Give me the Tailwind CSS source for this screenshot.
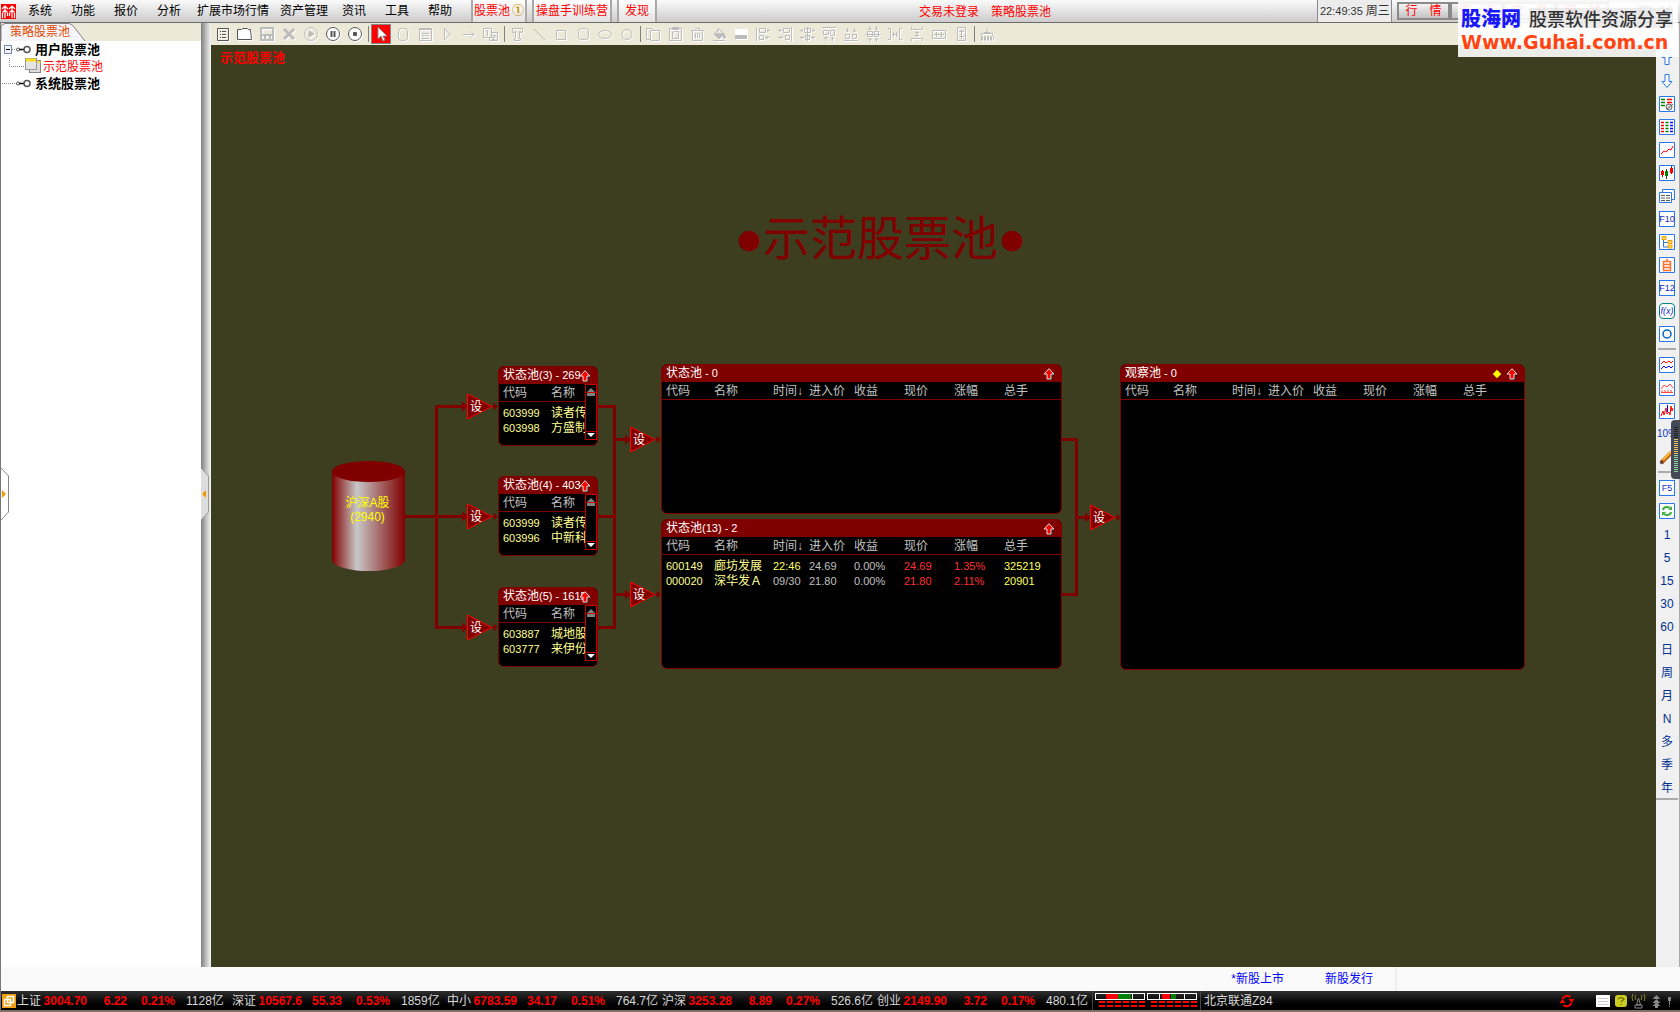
<!DOCTYPE html>
<html lang="zh-CN">
<head>
<meta charset="utf-8">
<title>策略股票池</title>
<script src="https://cdn.jsdelivr.net/npm/@tailwindcss/browser@4"></script>
</head>
<body class="flex h-screen flex-col overflow-hidden bg-[#7d7264] font-['Liberation_Sans','Noto_Sans_CJK_SC',sans-serif] text-xs leading-4 text-black">

<header class="relative flex h-[23px] shrink-0 items-center border-b border-[#6c6c6c] bg-linear-to-b from-[#fafafa] to-[#cccccc] pl-px whitespace-nowrap">
  <svg class="mr-3 size-[15px] shrink-0" viewBox="0 0 15 15"><rect width="15" height="15" fill="#f00"/><path d="M1 5l3-3 3 3M8 5l3-3 3 3M1.500 8.500L4 6l2.500 2.500M8.500 8.500L11 6l2.500 2.500M4 3v11M11 3v11M1.500 9v5M6.500 9v3M8.500 9v3M13.500 9v5" fill="none" stroke="#fff" stroke-width="1.200"/></svg>
  <nav class="flex h-full shrink-0 items-stretch">
    <button class="w-[43px] text-left">系统</button>
    <button class="w-[43px] text-left">功能</button>
    <button class="w-[43px] text-left">报价</button>
    <button class="w-[40px] text-left">分析</button>
    <button class="w-[83px] text-left">扩展市场行情</button>
    <button class="w-[62px] text-left">资产管理</button>
    <button class="w-[43px] text-left">资讯</button>
    <button class="w-[43px] text-left">工具</button>
    <button class="w-[43px] text-left">帮助</button>
    <button class="mr-[5px] flex w-[56px] items-center justify-center gap-0.5 border-x-2 border-[#a8a8a8] bg-linear-to-b from-white to-[#e2e2e2] text-[#f00]">股票池<span class="font-bold text-[#d09000]">①</span></button>
    <button class="mr-[5px] w-[80px] border-x-2 border-[#a8a8a8] bg-linear-to-b from-white to-[#e2e2e2] text-[#f00]">操盘手训练营</button>
    <button class="w-[40px] border-x-2 border-[#a8a8a8] bg-linear-to-b from-white to-[#e2e2e2] text-[#f00]">发现</button>
  </nav>
  <div class="flex flex-1 justify-center gap-3 pt-px pr-1 text-[#f00]"><span>交易未登录</span><span>策略股票池</span></div>
  <time class="flex h-full w-[75px] shrink-0 items-center border-x border-[#8a8a8a] bg-[#ececec] pl-0.5 text-[#333]"><span class="mr-[3px] text-[11px]">22:49:35</span>周三</time>
  <div class="flex w-[288px] shrink-0 items-center pl-[5px] text-[#f00]">
    <button class="h-[18px] w-[53px] border-2 border-[#8a8a8a] bg-linear-to-b from-[#f4f4f4] to-[#c2c2c2] leading-[14px]">行　情</button>
    <button class="h-[18px] w-[53px] border-2 border-[#8a8a8a] bg-linear-to-b from-[#f4f4f4] to-[#c2c2c2] leading-[14px]">资　讯</button>
    <button class="h-[18px] w-[53px] border-2 border-[#8a8a8a] bg-linear-to-b from-[#f4f4f4] to-[#c2c2c2] leading-[14px]">交　易</button>
    <button class="h-[18px] w-[53px] border-2 border-[#8a8a8a] bg-linear-to-b from-[#f4f4f4] to-[#c2c2c2] leading-[14px]">网　站</button>
    <svg class="ml-2 h-4 w-[60px]" viewBox="0 0 60 16" fill="none" stroke="#666" stroke-width="2"><path d="M4 12h9M23 4h10v8H23zM44 3l10 10M54 3L44 13"/></svg>
  </div>
</header>

<div class="flex min-h-0 flex-1 border-l border-[#777]">
  <aside class="relative flex w-[200px] shrink-0 flex-col bg-white">
    <div class="flex h-[18px] shrink-0 bg-[#ece9d8]">
      <svg class="absolute top-0 left-0 h-[18px] w-[90px]" viewBox="0 0 90 18"><path d="M0 18V4Q1 1 4 .5H68Q71 1 73 4L84 18" fill="#f6f6fa" stroke="#808080"/></svg>
      <button class="relative ml-[9px] text-[#e04a00]">策略股票池</button>
    </div>
    <ul class="text-[13px]">
      <li class="flex h-[17px] items-center font-bold"><svg class="mr-1 h-[17px] w-[30px]" viewBox="0 0 30 17" fill="none"><rect x="3.500" y="4.500" width="7" height="8" stroke="#7788bb" fill="#f5f5fa"/><path d="M5 8.500h4" stroke="#000"/><path d="M11 8.500h5" stroke="#888" stroke-dasharray="1 1"/><circle cx="17" cy="8.500" r="1.500" stroke="#555"/><path d="M18 8.500h5" stroke="#000" stroke-width="1.500"/><circle cx="26" cy="8.500" r="3" stroke="#555" stroke-width="1.500"/></svg>用户股票池</li>
      <li class="flex h-[17px] items-center text-xs text-[#f00]"><svg class="mr-0.5 h-[17px] w-[40px]" viewBox="0 0 40 17" fill="none"><path d="M8.500 0v8.500H24M37 8.500h3" stroke="#888" stroke-dasharray="1 1"/><rect x="28.500" y="2.500" width="11" height="12" fill="#ddd" stroke="#888"/><rect x="24.500" y=".500" width="11" height="11" fill="#e4e4e4" stroke="#999"/><path d="M25 2h10" stroke="#f8e020" stroke-width="3"/><path d="M36.500 4h3" stroke="#f8e020" stroke-width="2"/></svg>示范股票池</li>
      <li class="flex h-[17px] items-center font-bold"><svg class="mr-1 h-[17px] w-[30px]" viewBox="0 0 30 17" fill="none"><path d="M1 8.500h15" stroke="#888" stroke-dasharray="1 1"/><circle cx="17" cy="8.500" r="1.500" stroke="#555"/><path d="M18 8.500h5" stroke="#000" stroke-width="1.500"/><circle cx="26" cy="8.500" r="3" stroke="#555" stroke-width="1.500"/></svg>系统股票池</li>
    </ul>
    <svg class="absolute top-[444px] left-0 h-[54px] w-[9px]" viewBox="0 0 9 54"><path d="M0 1l7.500 8v36L0 53" fill="#fff" stroke="#888"/><path d="M1 23l4 4-4 4z" fill="#f09800"/></svg>
  </aside>
  <div class="relative w-[10px] shrink-0 bg-linear-to-r from-[#808080] via-[#bdbdbd] to-[#f6f6f6]">
    <svg class="absolute top-[444px] left-0 h-[54px] w-[9px]" viewBox="0 0 9 54"><path d="M0 1l7.500 8v36L0 53" fill="#ddd" stroke="#999"/><path d="M5 23l-4 4 4 4z" fill="#f09800"/></svg>
  </div>

  <main class="flex min-w-0 flex-1 flex-col">
    <div id="tools" class="flex h-[22px] shrink-0 items-center bg-[#ece9d8] pl-px"></div>
    <div class="relative flex-1 overflow-hidden bg-[#3d3d20]">
      <p class="pt-[5px] pl-[9px] text-[13px] font-bold text-[#f00]">示范股票池</p>
      <h1 class="absolute top-[170px] left-[524px] flex items-center text-[47px] leading-[48px] font-normal whitespace-nowrap text-[#800000]"><span class="flex w-[28px] justify-center font-['DejaVu_Sans'] text-[27px]">●</span>示范股票池<span class="flex w-[28px] justify-center font-['DejaVu_Sans'] text-[27px]">●</span></h1>
      <svg class="absolute top-0 left-0 h-[922px] w-[1445px]" viewBox="211 45 1445 922" fill="none">
        <defs>
          <linearGradient id="cyl"><stop offset="0" stop-color="#800000"/><stop offset=".34" stop-color="#c8c8c8"/><stop offset="1" stop-color="#800000"/></linearGradient>
          <g id="gate"><path d="M-5-5l6 5-6 5z" fill="#800000"/><path d="M.500-12.500L25 0 .500 12.500z" fill="#800000" stroke="#f00"/><path d="M25 0h3M27-3l3 3-3 3z" fill="#800000" stroke="#800000"/></g>
        </defs>
        <g stroke="#800000" stroke-width="3" stroke-linejoin="round">
          <path d="M405 516.500h60M465 406.500h-28.500v221H465M598 406.500h16.500v221H598M598 516.500h16M614 439.500h14M614 594.500h14M1062 439.500h14.500v155H1062M1076 517.500h12"/>
        </g>
        <use href="#gate" x="467" y="406.500"/><use href="#gate" x="467" y="516.500"/><use href="#gate" x="467" y="627.500"/>
        <use href="#gate" x="630" y="439.500"/><use href="#gate" x="630" y="594.500"/><use href="#gate" x="1090" y="517.500"/>
        <path d="M332 471v89a36.500 11 0 0 0 73 0v-89z" fill="url(#cyl)"/>
        <ellipse cx="368.500" cy="471.500" rx="36.500" ry="10.500" fill="#800000"/>
      </svg>
      <div id="nodes"></div>
    </div>
  </main>

  <aside id="side" class="flex w-6 shrink-0 flex-col border-r border-[#aaa] bg-[#f0f0f0] pt-[23px] pr-px"></aside>
</div>

<div class="flex h-6 shrink-0 items-stretch border-l border-[#777] bg-[#fafafa]">
  <div class="flex flex-1 items-center justify-end gap-[41px] border-r-2 border-[#eee] pr-[22px] text-[#00f]"><a href="#">*新股上市</a><a href="#">新股发行</a></div>
  <div class="w-[283px]"></div>
</div>

<footer class="mb-0.5 flex h-[19px] shrink-0 items-center border-l border-[#777] bg-linear-to-b from-[#303030] to-black pl-px whitespace-nowrap text-[#d8d8d8]">
  <svg class="mr-px size-[14px] shrink-0" viewBox="0 0 14 14"><rect width="14" height="14" fill="#f0a010"/><path d="M5.500 2.500h6v6h-6zM2.500 5.500h6v6h-6z" fill="none" stroke="#fff" stroke-width="1.500"/></svg>
  <div id="quotes" class="flex shrink-0"></div>
  <svg class="h-[19px] w-[109px] shrink-0" viewBox="1092 0 109 19" shape-rendering="crispEdges"><path d="M1092.500 0v19M1200 0v19" stroke="#444"/><path d="M1106 3h12v5h-12zM1162 3h8v5h-8z" fill="#f00"/><path d="M1118 3h13v5h-13zM1171 3h5v5h-5z" fill="#008000"/><path d="M1095.500 2.500h49v6h-49zM1147.500 2.500h49v6h-49zM1132.500 3v5M1159.500 3v5M1184.500 3v5" stroke="#fff" fill="none"/><path d="M1099 11h46M1099 15h46M1151 11h46M1151 15h46" stroke="#f00" stroke-width="2" stroke-dasharray="6 2"/></svg>
  <span class="ml-[3px] flex-1">北京联通Z84</span>
  <svg class="h-4 w-[122px] shrink-0" viewBox="1558 0 122 16" fill="none"><path d="M1562.500 6a5 5 0 0 1 8-2M1571.500 10a5 5 0 0 1-8 2" stroke="#f00" stroke-width="2"/><path d="M1568.500 6h6l-3 4zM1559.500 10h6l-3-4z" fill="#f00"/><rect x="1596" y="2" width="14" height="12" fill="#fff"/><path d="M1598 5.500h10M1598 8.500h10M1598 11.500h10" stroke="#ccc"/><rect x="1615" y="2" width="12" height="12" rx="3" fill="#cccc20"/><path d="M1618 6q3-3 6 0l-3 3M1621 11v1" stroke="#777700" stroke-width="1.500"/><path d="M1638.500 5l-2 7h4zM1635 12h7v3h-7z" stroke="#888"/><path d="M1636 2q-2 2 0 5M1633 1q-2 3 0 7M1641 2q2 2 0 5M1644 1q2 3 0 7" stroke="#888820"/><path d="M1656.500 2l4 4h-8zM1656.500 6l4 4h-8zM1656.500 9l4 4h-8zM1655 12h3v3h-3z" fill="#888"/><path d="M1668 4h3v4h-3zM1669 8h1v4h-1zM1669 13h1v1h-1z" fill="#888"/></svg>
</footer>

<div class="absolute top-0.5 right-0.5 flex h-[55px] w-[220px] flex-col bg-white/90 pt-1 pl-[3px] whitespace-nowrap">
  <div class="flex h-6 items-center gap-2"><b class="font-['Noto_Sans_CJK_SC'] text-xl leading-6 font-black text-[#1818f8]">股海网</b><span class="bg-[#bbb]/25 font-['Noto_Sans_CJK_SC'] text-lg leading-5 font-medium text-[#333]">股票软件资源分享</span></div>
  <a href="#" class="font-['DejaVu_Sans'] text-[19px] leading-6 font-bold text-[#ff4412]">Www.Guhai.com.cn</a>
</div>

<svg class="absolute top-[420px] right-0 h-[59px] w-[9px]" viewBox="0 0 9 59"><path d="M9 0H4Q0 0 0 4v51q0 4 4 4h5z" fill="#444a55"/><path d="M5 7v13" stroke="#222" stroke-width="4" stroke-dasharray="1 1"/><path d="M5 19v16" stroke="#e8c060" stroke-width="4" stroke-dasharray="1 1"/><path d="M5 35v18" stroke="#90d0a0" stroke-width="4" stroke-dasharray="1 1"/></svg>

<script>
const el = id => document.getElementById(id);

/* Toolbar: [label, svg body, state]; null is a separator */
const tools = [
 ['新建','<path d="M2.500 2.500h11v12h-11zM5 5.500h1M7 5.500h4M5 8.500h1M7 8.500h4M5 11.500h1M7 11.500h4"/>',1],
 ['打开','<path d="M.500 3.500h4l1-1h5l1 1h2l1 10h-14z" fill="#fff"/>',1],
 ['保存','<path d="M2 2h12v12H2z" stroke-width="2"/><path d="M2 8h12v2H2zM5 10h2v4H5zM10 10h2v4h-2z" fill="currentColor" stroke="none"/>'],
 ['删除','<path d="M3 3l10 10M13 3L3 13" stroke-width="3"/>'],
 ['运行','<circle cx="8" cy="8" r="6.500"/><path d="M6 5l5 3-5 3z" fill="currentColor"/>'],
 ['暂停','<circle cx="8" cy="8" r="6.500" fill="#fff"/><path d="M6.500 5v6M9.500 5v6" stroke-width="2"/>',1],
 ['停止','<circle cx="8" cy="8" r="6.500" fill="#fff"/><path d="M6.500 6.500h3v3h-3z" fill="currentColor"/>',1],
 null,
 ['选择','<path d="M5 1v12l3-3 2 5 2-1-2-4h4z" fill="#fff" stroke="#888"/>',2],
 ['股票池','<rect x="3.500" y="2.500" width="9" height="12" rx="3"/>'],
 ['状态池','<path d="M2.500 2.500h12v12h-12zM3 3.500h11M5 7.500h7M5 9.500h7M5 12.500h7"/>'],
 ['条件','<path d="M5.500 2.500l6 5.500-6 6z"/>'],
 ['连接','<path d="M2 8.500h11M10 5.500l3 3-3 3"/>'],
 ['顺序','<path d="M.500 2.500h8v9h-8zM9 6.500h5.500v8h-8v-3M3 4.500h1.500v5M9 9.500h3v2H9.500v2H12"/>'],
 null,
 ['文字','<path d="M3.500 2.500h10v4h-2v-1h-1v7h1v2h-6v-2h1v-7h-1v1h-2z"/>'],
 ['直线','<path d="M3 3l11 11"/>'],
 ['矩形','<path d="M3.500 4.500h9v9h-9z"/>'],
 ['圆角矩形','<rect x="3.500" y="2.500" width="10" height="11" rx="3"/>'],
 ['椭圆','<ellipse cx="8" cy="8.500" rx="6.500" ry="4"/>'],
 ['圆形','<circle cx="8" cy="8.500" r="5"/>'],
 null,
 ['复制','<path d="M1.500 2.500h5l2 2M1.500 2.500v11h4M5.500 4.500h9v10h-9z"/>'],
 ['粘贴','<path d="M2.500 2.500h12v12h-12zM5.500 1.500h6v2h-6zM5.500 6.500l2-1h4v7h-6z"/>'],
 ['清除','<path d="M2.500 4.500h12M6.500 2.500h4v2M3.500 4.500v10h10v-10M6.500 7v5M8.500 7v5M10.500 7v5"/>'],
 ['填充','<path d="M3 8l5-5 5 5-5 5zM5 8h7M7 2v5M2 14.500h12" /><path d="M4 8h8l-4 4zM13 8l2 4h-3z" fill="currentColor"/>'],
 ['颜色','<path d="M2 3h12v6H2z" fill="#fff" stroke="none"/><path d="M2 9h12v4H2z" fill="currentColor" stroke="none"/>'],
 ['左对齐','<path d="M1.500 1v14M4.500 2.500h6v4h-6zM4.500 9.500h4v4h-4zM12 4.500h3M10 11.500h5M13 3v3M12 10v3"/>'],
 ['右对齐','<path d="M14.500 1v14M6.500 2.500h6v4h-6zM8.500 9.500h4v4h-4zM1 4.500h4M1 11.500h5M3 3v3M4 10v3"/>'],
 ['水平居中','<path d="M8.500 1v14M5.500 2.500h6v4h-6zM6.500 9.500h4v4h-4zM1 4.500h3M13 4.500h3M1 11.500h4M12 11.500h4M3 3v3M14 3v3M3 10v3M14 10v3"/>'],
 ['顶端对齐','<path d="M1 1.500h14M2.500 4.500h5v4h-5zM9.500 4.500h4v5h-4zM5 10v5M11.500 11v4M3 12h4M10 12h3"/>'],
 ['底端对齐','<path d="M1 14.500h14M2.500 8.500h4v4h-4zM9.500 8.500h4v4h-4zM4.500 2v4M11.500 2v4M3 5h3M10 5h3"/>'],
 ['垂直居中','<path d="M0 8.500h16M2.500 5.500h5v5h-5zM9.500 5.500h4v5h-4zM5 0v4M11.500 0v4M5 12v4M11.500 12v4M3 3h4M10 3h3M3 13h4M10 13h3"/>'],
 ['横向等距','<path d="M1 2.500h2.500v11H1M15 2.500h-2.500v11H15M5 8.500h6M6.500 6v5M9.500 6v5"/>'],
 ['纵向等距','<path d="M2.500 1v2.500h11V1M2.500 15v-2.500h11V15M8 5v6M6 6.500h4M6 9.500h4"/>'],
 ['等宽','<path d="M1.500 4.500h13v8h-13zM3 8.500h10M5.500 6v5M10.500 6v5"/>'],
 ['等高','<path d="M4.500 1.500h8v13h-8zM8.500 3v10M6 5.500h5M6 10.500h5"/>'],
 null,
 ['清空','<path d="M8 2v5M2.500 10V7.500h11V10M5 6.500h6"/><path d="M2 12.500h13" stroke-width="4" stroke-dasharray="2 1"/>']
];
const toolCls = ['text-[#bcbcbc] drop-shadow-[1px_1px_0_#fff]','text-[#555] drop-shadow-[1px_1px_0_#fff]','text-white'];
el('tools').innerHTML = tools.map(t => !t
 ? '<span class="flex w-1 justify-center"><i class="h-4 w-px bg-[#808080]"></i></span>'
 : `<button aria-label="${t[0]}" class="flex h-5 w-[22px] items-center justify-center"><span class="flex h-5 w-5 items-center justify-center ${t[2]===2?'border border-[#888] bg-[#f00]':''}"><svg class="size-4 shrink-0 ${toolCls[t[2]||0]}" viewBox="0 0 16 16" fill="none" stroke="currentColor">${t[1]}</svg></span></button>`).join('');

/* Pool panels of the flow chart */
const up = '<svg class="size-3" viewBox="0 0 12 12"><path d="M7 2l5 5H9.500v5h-4V7z" fill="#222"/><path d="M6 .700L11 6H8v5H4V6H1z" fill="#f00" stroke="#ddd"/></svg>';
const big = ['代码','名称','时间↓','进入价','收益','现价','涨幅','总手'];
const cls = ['text-[#ffff90]','text-xs text-[#ffff90]','','text-[#c0c0c0]','text-[#c0c0c0]','text-[#ff3030]','text-[#ff3030]','text-[#ffff60]'];
function panel(place, name, count, cols, rows, small, mark) {
  const widths = small ? ['w-[52px]',''] : ['w-[52px]','w-[59px]','w-[36px]','w-[45px]','w-[50px]','w-[50px]','w-[50px]',''];
  return `<section class="absolute overflow-hidden rounded-md border border-[#800000] bg-black ${place}">
  <h2 class="flex h-[17px] items-center bg-[#800000] pl-1 leading-[15px] whitespace-nowrap text-white"><span class="${small?'w-[76px]':'flex-1'}">${name}<span class="text-[11px]">${count}</span></span>${mark?'<i class="mr-1.5 size-1.5 rotate-45 bg-[#ff0]"></i>':''}<span class="${small?'relative':'pr-[6px]'}">${up}</span></h2>
  <div class="${small?'w-[86px] overflow-hidden':''}"><table class="w-full table-fixed border-collapse text-left whitespace-nowrap text-[#c0c0c0]">
  <thead><tr class="h-[17px] border-b border-[#800000]">${cols.map((c,i)=>`<th class="p-0 pt-0.5 leading-[14px] font-normal ${widths[i]} ${i===0?'pl-1':''}">${c}</th>`).join('')}</tr></thead>
  <tbody class="text-[11px] before:block before:h-1">${rows.map((r,k)=>`<tr class="h-[15px]">${r.map((c,i)=>`<td class="p-0 ${i===0?'pl-1':''} ${i===2?(k?'text-[#c0c0c0]':'text-[#ffff60]'):cls[i]} leading-[15px]">${c}</td>`).join('')}</tr>`).join('')}</tbody></table></div>
  ${small?'<div class="absolute top-[17px] right-0 flex h-[56px] w-3 flex-col items-center justify-between border border-[#c00000] bg-black"><svg class="h-3 w-2.5" viewBox="0 0 10 12"><path d="M5 3l4 4H1zM1 8h8v3H1z" fill="#808080"/><path d="M0 7.500h10" stroke="#c00000"/></svg><svg class="h-2 w-2.5" viewBox="0 0 10 8"><path d="M0 .500h10" stroke="#c00000"/><path d="M1 2h8L5 6z" fill="#fff"/></svg></div>':''}
  </section>`;
}
const gate = p => `<button class="absolute w-4 text-center text-white ${p}">设</button>`;
el('nodes').innerHTML =
 '<div class="absolute top-[451px] left-[120px] w-[73px] text-center leading-[14px] text-[#ff0]">沪深A股<br>(2940)</div>' +
 panel('top-[321px] left-[287px] w-[100px] h-[80px]','状态池','(3) - 269',['代码','名称'],[['603999','读者传媒'],['603998','方盛制药']],1) +
 panel('top-[431px] left-[287px] w-[100px] h-[80px]','状态池','(4) - 403',['代码','名称'],[['603999','读者传媒'],['603996','中新科技']],1) +
 panel('top-[542px] left-[287px] w-[100px] h-[80px]','状态池','(5) - 1615',['代码','名称'],[['603887','城地股份'],['603777','来伊份']],1) +
 panel('top-[319px] left-[450px] w-[401px] h-[150px]','状态池',' - 0',big,[]) +
 panel('top-[474px] left-[450px] w-[401px] h-[150px]','状态池','(13) - 2',big,[['600149','廊坊发展','22:46','24.69','0.00%','24.69','1.35%','325219'],['000020','深华发Ａ','09/30','21.80','0.00%','21.80','2.11%','20901']]) +
 panel('top-[319px] left-[909px] w-[405px] h-[306px]','观察池',' - 0',big,[],0,1) +
 gate('top-[354px] left-[257px]') + gate('top-[464px] left-[257px]') + gate('top-[575px] left-[257px]') +
 gate('top-[387px] left-[420px]') + gate('top-[542px] left-[420px]') + gate('top-[465px] left-[880px]');

/* Right-hand shortcut bar */
const box = '<path d="M.500.500h15v15H.500z" fill="#fff" stroke="#2878e8"/>';
const label = t => `<span class="flex h-4 w-4 items-center justify-center border border-[#2878e8] bg-white text-[9px] leading-[14px] text-[#1030c0]">${t}</span>`;
const side = [
 ['上翻','<path d="M8 1.500l5 6h-3v7H6v-7H3z" fill="#fff" stroke="#2878e8"/>'],
 ['下翻','<path d="M8 14.500l5-6h-3v-7H6v7H3z" fill="#fff" stroke="#2878e8"/>'],
 ['选股',box+'<path d="M2 3.500h4M2 6.500h4M2 9.500h4" stroke="#008000" stroke-width="1.500"/><path d="M8 3.500h5M8 6.500h5" stroke="#f00" stroke-width="1.500"/><circle cx="10" cy="11" r="3" fill="#ddd" stroke="#666"/><path d="M8 13l6-5" stroke="#666"/>'],
 ['报价表',box+'<path d="M2 3.500h3M2 6.500h3M2 9.500h3M2 12.500h3" stroke="#f00" stroke-width="1.500"/><path d="M6.500 3.500h3M6.500 6.500h3M6.500 9.500h3M6.500 12.500h3" stroke="#008000" stroke-width="1.500"/><path d="M11 3.500h3M11 6.500h3M11 9.500h3M11 12.500h3" stroke="#00f" stroke-width="1.500"/>'],
 ['分时',box+'<path d="M2 12l3-3 2 1 3-3 2 1 2-4" stroke="#f00" fill="none"/>'],
 ['K线',box+'<path d="M3.500 5v7M7.500 4v10M12.500 1v8" stroke="#333"/><path d="M2 6h3v4H2zM11 3h3v5h-3z" fill="#f00"/><path d="M6 6h3v5H6z" fill="#008000"/>'],
 ['多窗',`<path d="M3.500 1.500h12v10h-12z" fill="#fff" stroke="#2878e8"/><path d="M.500 4.500h12v10H.500z" fill="#fff" stroke="#2878e8"/><path d="M2 7.500h4M7 7.500h4M2 10h4M7 10h4M2 12.500h4M7 12.500h4" stroke="#555"/>`],
 label('F10'),
 ['树形',box+'<path d="M4.500 5v8H9M5 8.500h4" stroke="#2878e8" fill="none"/><path d="M3 2.500h4v3H3zM9 6.500h4v3H9zM9 11h4v3H9z" fill="#ffe060" stroke="#f0a000"/>'],
 ['自选',box+'<path d="M4.500 4.500h7v9h-7zM5 7.500h6M5 10.500h6M8 2v2" stroke="#ff7030" stroke-width="1.500" fill="none"/>'],
 label('F12'),
 '<span class="flex h-4 w-4 items-center justify-center rounded-sm border border-[#008080] bg-white text-[9px] leading-[14px] text-[#1030c0] italic">f(x)</span>',
 ['圆',box+'<circle cx="8" cy="8" r="4" fill="none" stroke="#0060c0" stroke-width="1.500"/>'],
 null,
 ['叠加',box+'<path d="M2 7l3-3 2 2 3-2 2 2 2-2" stroke="#f00" fill="none"/><path d="M2 12l3-3 2 2 3-2 2 2 2-2" stroke="#00f" fill="none"/>'],
 ['面积',box+'<path d="M2 9l3-4 3 2 3-3 3 4M2 12.500h12M3 10v3M6 10v3M9 10v3M12 10v3" stroke="#f44" fill="none"/>'],
 ['波动',box+'<path d="M2 13l2-5 1 4 2-7 1 6 2-2 1 3 1-9 1 5 1-3" stroke="#f00" fill="none"/><path d="M8.500 2v7" stroke="#00f"/>'],
 '<span class="text-[10px] text-[#1030c0]">10%</span>',
 ['画线','<path d="M2 14L12 4" stroke="#c06010" stroke-width="4"/><path d="M4 11l9-9" stroke="#ffb830" stroke-width="2"/><path d="M1 15l1-4 3 3z" fill="#444"/>'],
 null,
 label('F5'),
 ['刷新',box+'<path d="M4 7a4 3 0 0 1 7-2M12 9a4 3 0 0 1-7 2" stroke="#40b040" stroke-width="2" fill="none"/><path d="M9 7h4V3zM7 9H3v4z" fill="#40b040"/>'],
 ...['1','5','15','30','60','日','周','月','N','多','季','年'].map(t=>`<span class="pt-0.5 text-xs text-[#003090]">${t}</span>`)
];
el('side').innerHTML = side.map(s => s===null
 ? '<hr class="mx-0.5 my-[3px] h-0.5 shrink-0 border-0 bg-[#aaa]">'
 : `<button class="flex h-[23px] shrink-0 items-center justify-center" ${Array.isArray(s)?`aria-label="${s[0]}"`:''}>${Array.isArray(s)?`<svg class="size-4" viewBox="0 0 16 16">${s[1]}</svg>`:s}</button>`).join('') + '<hr class="h-0.5 shrink-0 border-0 bg-[#aaa]">';

/* Index quotes */
el('quotes').innerHTML = [['上证','3004.70','6.22','0.21%','1128亿'],['深证','10567.6','55.33','0.53%','1859亿'],['中小','6783.59','34.17','0.51%','764.7亿'],['沪深','3253.28','8.89','0.27%','526.6亿'],['创业','2149.90','3.72','0.17%','480.1亿']]
 .map(q=>`<div class="grid w-[215px] grid-cols-[24px_46px_40px_48px_57px] text-right"><span>${q[0]}</span><b class="text-[#f00]">${q[1]}</b><b class="text-[#f00]">${q[2]}</b><b class="text-[#f00]">${q[3]}</b><span class="pl-[11px] text-left">${q[4]}</span></div>`).join('');
</script>
</body>
</html>
